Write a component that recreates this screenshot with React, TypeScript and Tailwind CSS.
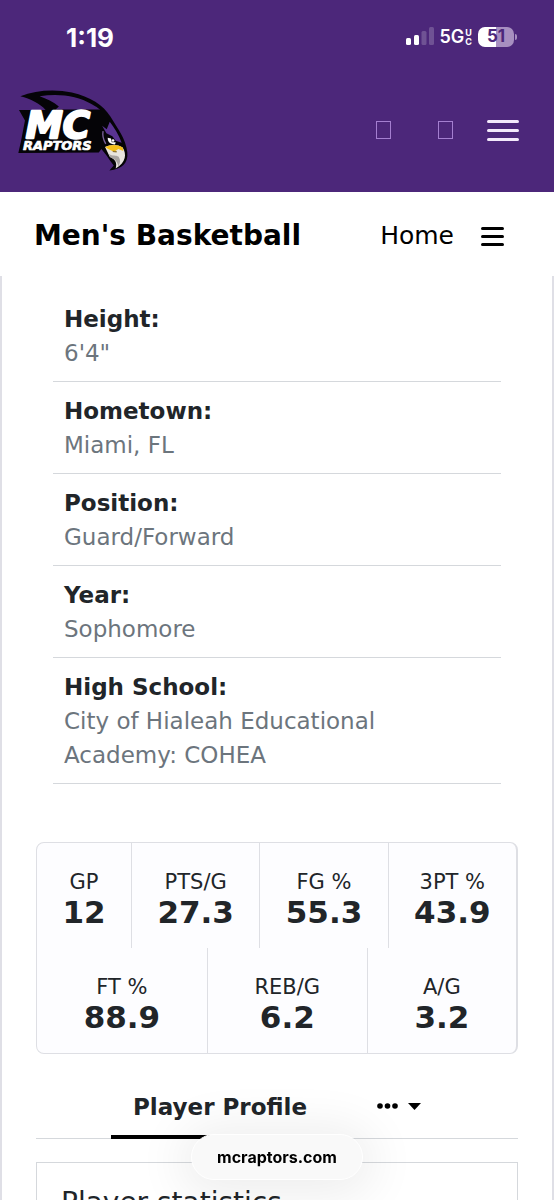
const details = [
  { label: "Height:", value: "6'4\"" },
  { label: "Hometown:", value: "Miami, FL" },
  { label: "Position:", value: "Guard/Forward" },
  { label: "Year:", value: "Sophomore" },
  { label: "High School:", value: "City of Hialeah Educational Academy: COHEA" },
];

const stats = [
  { label: "GP", value: "12", divider: true },
  { label: "PTS/G", value: "27.3", divider: true },
  { label: "FG %", value: "55.3", divider: true },
  { label: "3PT %", value: "43.9", divider: false },
  { label: "FT %", value: "88.9", divider: true },
  { label: "REB/G", value: "6.2", divider: true },
  { label: "A/G", value: "3.2", divider: false },
];

function StatusBar() {
  return (
    <div className="flex h-[74px] items-center justify-between pl-[66px] pr-[37px] font-['Inter',sans-serif] text-white">
      <span className="text-[26px] font-bold">1:19</span>
      <div className="flex items-center gap-1.5">
        <svg className="h-5 w-7" viewBox="0 0 28 20" fill="currentColor">
          <rect x="0" y="11" width="5" height="7" rx="1.5" />
          <rect x="8" y="8" width="5" height="10" rx="1.5" />
          <rect x="15.5" y="4" width="5" height="14" rx="1.5" opacity="0.2" />
          <rect x="23" y="0" width="5" height="18" rx="1.5" opacity="0.2" />
        </svg>
        <div className="flex items-center gap-px font-semibold">
          <span className="text-lg leading-5">5G</span>
          <span className="flex flex-col text-[9px] font-bold leading-[9px]">
            <span>U</span>
            <span>C</span>
          </span>
        </div>
        <div className="flex items-center gap-px">
          <span className="flex h-5 w-9 items-center justify-center rounded-[7px] bg-linear-to-r from-white from-50% to-[#a78fc0] to-50% text-[17px] font-bold text-[#4c277a]">
            51
          </span>
          <span className="h-1.5 w-0.5 rounded-r bg-[#a78fc0]"></span>
        </div>
      </div>
    </div>
  );
}

function Logo() {
  return (
    <svg className="h-[87px] w-[113px]" viewBox="50 30 340 260" role="img" aria-label="MC Raptors">
      {/* Crest and outline */}
      <path
        d="M60 57 C105 39 165 35 215 46 C270 58 310 85 331 118 C350 150 378 185 382 226 C385 258 366 276 328 280 L341 265 C333 255 326 246 320 236 L304 216 L296 226 L54 228 L62 192 L74 130 L56 98 L136 98 C119 79 91 65 60 57 Z"
        fill="#050407"
      />
      <path
        d="M118 57 C175 47 232 56 274 80 C287 87 294 92 300 97 L166 97 L176 88 C160 74 138 64 118 57 Z"
        fill="#4c277a"
      />
      {/* Face */}
      <path d="M306 146 L320 156 L329 134 C342 151 356 173 365 197 L347 191 L337 177 L319 168 Z" fill="#593391" />
      <path d="M309 162 C306 176 310 188 317 200" stroke="#7b629a" strokeWidth="4" fill="none" />
      <path d="M323 182 C322 193 331 203 345 202 L347 195 L335 195 L333 184 Z" fill="#fff" />
      <circle cx="339" cy="190" r="4" fill="#fff" />
      {/* Beak */}
      <path d="M315 210 C329 202 350 200 368 211 C380 231 379 255 347 274 C352 256 345 247 329 239 Z" fill="#e9e5df" />
      <path d="M315 210 C333 202 350 201 368 211 L370 222 L355 216 L342 224 L324 216 Z" fill="#f4bf19" />
      <path d="M326 230 C339 239 347 233 356 239 C362 249 361 259 355 268 C352 254 347 247 331 241 Z" fill="#a9a4a2" />
      <path d="M338 223 L350 224" stroke="#8d7434" strokeWidth="4" />
      <g
        fontFamily="'DejaVu Sans', sans-serif"
        fontWeight="bold"
        fontStyle="italic"
        fill="#fff"
        stroke="#fff"
        strokeLinejoin="round"
      >
        <text x="76" y="182" fontSize="112" strokeWidth="7">MC</text>
        <text x="68" y="218" fontSize="39" strokeWidth="2">RAPTORS</text>
      </g>
    </svg>
  );
}

function SiteHeader() {
  return (
    <header className="bg-[#4c277a] pb-1.5">
      <StatusBar />
      <nav className="flex h-28 items-center justify-between pl-[17px] pr-[35px]">
        <a href="#home">
          <Logo />
        </a>
        <div className="flex items-center">
          <button className="mr-[47px] h-[18px] w-[15px] border border-[#a47fd0]" aria-label="Search"></button>
          <button className="mr-[34px] h-[18px] w-[15px] border border-[#a47fd0]" aria-label="Account"></button>
          <button className="flex w-8 flex-col gap-1.5" aria-label="Open menu">
            <span className="h-[3px] w-full rounded-full bg-[#f3e9fb]"></span>
            <span className="h-[3px] w-full rounded-full bg-[#f3e9fb]"></span>
            <span className="h-[3px] w-full rounded-full bg-[#f3e9fb]"></span>
          </button>
        </div>
      </nav>
    </header>
  );
}

function TeamBar() {
  return (
    <div className="flex items-center justify-between pb-[22px] pl-[34px] pr-[50px] pt-[26px] leading-9 text-black">
      <h1 className="text-[28px] font-bold">Men's Basketball</h1>
      <div className="flex items-center gap-[27px]">
        <a href="#team-home" className="text-[25px]">
          Home
        </a>
        <button className="flex w-[23px] flex-col gap-[5px]" aria-label="Team menu">
          <span className="h-[3px] w-full rounded-full bg-black"></span>
          <span className="h-[3px] w-full rounded-full bg-black"></span>
          <span className="h-[3px] w-full rounded-full bg-black"></span>
        </button>
      </div>
    </div>
  );
}

export default function App() {
  return (
    <div className="h-screen overflow-hidden bg-white font-['DejaVu_Sans',Verdana,sans-serif] text-[#212529]">
      <SiteHeader />
      <TeamBar />

      <main className="border-x-2 border-[#dfdfe6] pt-3.5">
        {/* Player details */}
        <dl className="mx-[51px] text-[23px] leading-[34px]">
          {details.map((item) => (
            <div key={item.label} className="border-b border-[#d5d8dc] px-[11px] pb-[11px] pt-3">
              <dt className="font-bold">{item.label}</dt>
              <dd className="text-[#6c757d]">{item.value}</dd>
            </div>
          ))}
        </dl>

        {/* Season averages */}
        <div className="mx-[34px] mt-[58px] flex flex-wrap rounded-lg border border-r-2 border-[#dedfe4] bg-[#fdfdff]">
          {stats.map((stat) => (
            <div
              key={stat.label}
              className={`flex-auto px-5 pb-[21px] pt-6 text-center leading-[30px] ${
                stat.divider ? "border-r border-[#dedfe4]" : ""
              }`}
            >
              <div className="text-[21px]">{stat.label}</div>
              <div className="text-[31px] font-bold leading-[30px]">{stat.value}</div>
            </div>
          ))}
        </div>

        {/* Tabs */}
        <div className="mx-[34px] mt-5 flex justify-center gap-[26px] border-b border-[#d5d8dc]">
          <button className="-mb-px border-b-4 border-black px-[22px] pb-[11px] pt-4 text-[23px] font-bold leading-[34px]">
            Player Profile
          </button>
          <button className="flex items-center gap-2.5 px-[22px] text-black" aria-label="More tabs">
            <svg className="h-1.5 w-[21px]" viewBox="0 0 21 6" fill="currentColor">
              <circle cx="3" cy="3" r="2.8" />
              <circle cx="10.5" cy="3" r="2.8" />
              <circle cx="18" cy="3" r="2.8" />
            </svg>
            <svg className="h-[7px] w-[13px]" viewBox="0 0 13 7" fill="currentColor">
              <path d="M0 0h13L6.5 7z" />
            </svg>
          </button>
        </div>

        <section className="mx-[34px] mt-[23px] border border-[#d5d8dc] px-6 py-[22px]">
          <h2 className="text-[28px] leading-9">Player statistics</h2>
        </section>
      </main>

      {/* Floating address pill */}
      <div className="fixed inset-x-0 bottom-5 flex justify-center">
        <div className="rounded-full border border-white bg-[#f9f9f9] px-[25px] py-2.5 font-['Inter',sans-serif] text-base font-bold leading-6 text-black shadow-[0_4px_48px_12px_rgba(0,0,0,0.07)]">
          mcraptors.com
        </div>
      </div>
    </div>
  );
}
